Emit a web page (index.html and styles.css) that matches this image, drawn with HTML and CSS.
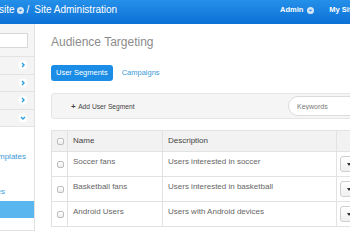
FILE: index.html
```html
<!doctype html>
<html>
<head>
	<meta charset="utf-8">
	<title>Audience Targeting</title>
	<link rel="stylesheet" href="styles.css">
</head>
<body>
<div class="page">
	<div class="topbar">
		<div class="crumbs">
			<span>site</span>
			<svg class="drop" width="7" height="7" viewBox="0 0 7 7"><circle cx="3.5" cy="3.5" r="3.5" fill="#d3e6f8"/><path d="M1.8 2.8h3.4L3.5 4.6z" fill="#1a7fe0"/></svg>
			<span class="sep">/</span>
			<span>Site Administration</span>
		</div>
		<div class="user-nav">
			<span>Admin</span>
			<svg class="drop" width="7" height="7" viewBox="0 0 7 7"><circle cx="3.5" cy="3.5" r="3.5" fill="#d3e6f8"/><path d="M1.8 2.8h3.4L3.5 4.6z" fill="#1a7fe0"/></svg>
			<span class="my-sites">My Sites</span>
		</div>
	</div>

	<div class="layout">
		<div class="sidebar">
			<div class="side-search"><input type="text"></div>
			<ul class="side-groups">
				<li><svg width="10" height="10" viewBox="0 0 10 10"><circle cx="5" cy="5" r="4.5" fill="#fff"/><path d="M4 3l2 2-2 2" fill="none" stroke="#2aa0dc" stroke-width="1.4"/></svg></li>
				<li><svg width="10" height="10" viewBox="0 0 10 10"><circle cx="5" cy="5" r="4.5" fill="#fff"/><path d="M4 3l2 2-2 2" fill="none" stroke="#2aa0dc" stroke-width="1.4"/></svg></li>
				<li><svg width="10" height="10" viewBox="0 0 10 10"><circle cx="5" cy="5" r="4.5" fill="#fff"/><path d="M4 3l2 2-2 2" fill="none" stroke="#2aa0dc" stroke-width="1.4"/></svg></li>
				<li><svg width="10" height="10" viewBox="0 0 10 10"><circle cx="5" cy="5" r="4.5" fill="#fff"/><path d="M3 4l2 2 2-2" fill="none" stroke="#2aa0dc" stroke-width="1.4"/></svg></li>
			</ul>
			<ul class="side-links">
				<li><a href="#">Site Templates</a></li>
				<li class="link-gap"></li>
				<li class="link-sites"><a href="#">Sites</a></li>
				<li class="active"><a href="#"></a></li>
			</ul>
		</div>

		<div class="content">
			<h1>Audience Targeting</h1>
			<div class="tabs">
				<a href="#" class="active">User Segments</a>
				<a href="#">Campaigns</a>
			</div>
			<div class="toolbar">
				<span class="add-btn"><b>+</b> Add User Segment</span>
				<input class="search" type="text" placeholder="Keywords">
			</div>
			<table class="segments">
				<tr>
					<th class="col-check"><span class="check"></span></th>
					<th class="col-name">Name</th>
					<th class="col-desc">Description</th>
					<th class="col-act"></th>
				</tr>
				<tr>
					<td class="col-check"><span class="check"></span></td>
					<td>Soccer fans</td>
					<td>Users interested in soccer</td>
					<td class="col-act"><span class="act-btn"><i class="caret"></i></span></td>
				</tr>
				<tr>
					<td class="col-check"><span class="check"></span></td>
					<td>Basketball fans</td>
					<td>Users interested in basketball</td>
					<td class="col-act"><span class="act-btn"><i class="caret"></i></span></td>
				</tr>
				<tr>
					<td class="col-check"><span class="check"></span></td>
					<td>Android Users</td>
					<td>Users with Android devices</td>
					<td class="col-act"><span class="act-btn"><i class="caret"></i></span></td>
				</tr>
			</table>
		</div>
	</div>
</div>
</body>
</html>
```

FILE: styles.css
```css
html,body{
	margin:0;
	padding:0;
	overflow:hidden;
}
body{
	font-family:"Liberation Sans", Arial, sans-serif;
	background:#fff;
	color:#555;
}
.page{
	width:420px;
}
ul{
	list-style:none;
	margin:0;
	padding:0;
}
a{
	text-decoration:none;
}

/* top bar */
.topbar{
	display:flex;
	height:24px;
	box-sizing:border-box;
	padding-top:4px;
	background:linear-gradient(#2490e9,#0c70d5);
	color:#fff;
	font-size:10px;
	line-height:12px;
}
.crumbs{
	display:flex;
	align-items:center;
	width:281px;
	height:12px;
	margin-left:-1px;
}
.crumbs .drop{
	margin:0 3px 0 2px;
}
.crumbs .sep{
	margin-right:5px;
}
.user-nav{
	display:flex;
	align-items:center;
	height:12px;
	font-size:7.5px;
	font-weight:bold;
	white-space:nowrap;
}
.user-nav .drop{
	margin-left:4px;
}
.user-nav .my-sites{
	margin-left:15px;
}

/* layout */
.layout{
	display:flex;
	align-items:flex-start;
}
.sidebar{
	flex:none;
	width:34px;
	border-right:1px solid #e1e1e1;
	border-bottom:1px solid #e1e1e1;
	overflow:hidden;
}
.side-search{
	background:#f5f5f5;
	padding:9px 6px 8px 0;
	border-bottom:1px solid #e3e3e3;
}
.side-search input{
	display:block;
	width:28px;
	height:15px;
	box-sizing:border-box;
	margin:0;
	padding:0;
	border:1px solid #d8d8d8;
	border-left:0;
	background:#fff;
}
.side-groups li{
	display:flex;
	justify-content:flex-end;
	align-items:center;
	height:16.5px;
	padding-right:6px;
	background:#f4f4f4;
	border-bottom:1px solid #e3e3e3;
}
.side-groups svg{
	display:block;
}
.side-links{
	padding:21px 0 12px;
	font-size:8px;
	line-height:17.5px;
}
.side-links a{
	display:flex;
	justify-content:flex-end;
	white-space:nowrap;
	color:#3b9ad9;
	padding-right:8px;
}
.side-links .link-sites a{
	padding-right:29px;
}
.side-links .link-gap{
	height:17.5px;
}
.side-links .active a{
	height:17.5px;
	background:#5ab6ee;
}

/* content */
.content{
	flex:none;
	width:330px;
	margin-left:16px;
}
.content h1{
	margin:11px 0 0;
	font-size:12px;
	line-height:14px;
	font-weight:normal;
	color:#8c8c8c;
}
.tabs{
	display:flex;
	margin-top:16px;
}
.tabs a{
	font-size:7.5px;
	line-height:16px;
	padding:0 5px;
	border-radius:3px;
	color:#3b9ad9;
}
.tabs a+a{
	margin-left:4px;
}
.tabs .active{
	background:#1c8de6;
	color:#fff;
}
.toolbar{
	display:flex;
	align-items:center;
	height:24px;
	margin-top:12px;
	background:#f5f5f5;
	border:1px solid #e5e5e5;
	border-radius:3px;
}
.add-btn{
	margin-left:19px;
	font-size:6.7px;
	color:#444;
}
.add-btn b{
	font-size:8px;
	margin-right:1px;
}
.search{
	margin:0 4px 0 auto;
	width:88px;
	height:20px;
	box-sizing:border-box;
	padding:0 8px;
	border:1px solid #dcdcdc;
	border-radius:10px;
	background:#fff;
	font-family:inherit;
	font-size:7px;
}
.search::placeholder{
	color:#777;
}

/* table */
.segments{
	margin-top:11px;
	width:330px;
	border-collapse:collapse;
	font-size:8px;
	line-height:10px;
	color:#666;
}
.segments th,.segments td{
	border:1px solid #e2e2e2;
	padding:5px;
	text-align:left;
	vertical-align:top;
}
.segments th{
	background:#f2f2f2;
	font-weight:normal;
	color:#444;
}
.segments .col-check{
	width:10px;
	padding:0 0 0 5px;
	vertical-align:middle;
}
.segments .col-name{
	width:84px;
}
.segments .col-desc{
	width:163px;
}
.segments .col-act{
	padding:4px 0 4px 3px;
}
.check{
	display:block;
	width:5px;
	height:5px;
	border:1px solid #bdbdbd;
	border-radius:2px;
	background:linear-gradient(#fff,#ececec);
}
.act-btn{
	display:flex;
	align-items:center;
	width:30px;
	height:16px;
	box-sizing:border-box;
	padding-left:6px;
	border:1px solid #cfcfcf;
	border-radius:3px;
	background:linear-gradient(#fff,#f0f0f0);
}
.caret{
	width:0;
	height:0;
	border-top:3px solid #333;
	border-left:2.5px solid transparent;
	border-right:2.5px solid transparent;
}
```
